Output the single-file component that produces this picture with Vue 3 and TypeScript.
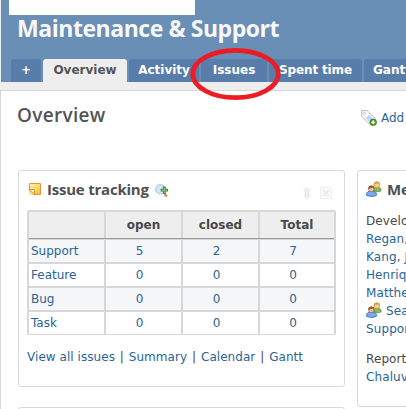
<script setup lang="ts">
interface Tab { label: string; key: string; active?: boolean }
interface Tracker { name: string; open: number; closed: number; total: number }

const tabs: Tab[] = [
  { label: '+', key: 'plus' },
  { label: 'Overview', key: 'overview', active: true },
  { label: 'Activity', key: 'activity' },
  { label: 'Issues', key: 'issues' },
  { label: 'Spent time', key: 'spent' },
  { label: 'Gantt', key: 'gantt' },
]
const trackers: Tracker[] = [
  { name: 'Support', open: 5, closed: 2, total: 7 },
  { name: 'Feature', open: 0, closed: 0, total: 0 },
  { name: 'Bug', open: 0, closed: 0, total: 0 },
  { name: 'Task', open: 0, closed: 0, total: 0 },
]
const links: string[] = ['View all issues', 'Summary', 'Calendar', 'Gantt']
const developers: string[] = ['Regan,', 'Kang, J', 'Henrique', 'Matthew']
</script>

<template>
  <div class="page">
    <svg class="defs" width="0" height="0">
      <symbol id="people" viewBox="0 0 16 16">
        <path d="M8 10V7.5Q8.500 6 11 6t4 1.800V10Q12 11.500 8 10z" fill="#86b957" stroke="#5e923a" stroke-width=".8" />
        <circle cx="10.700" cy="3.800" r="2.900" fill="#f3d08c" stroke="#c98f35" stroke-width=".7" />
        <path d="M7.800 3.500Q8 .6 11 .6t3 3L12.300 2.300z" fill="#d99e3a" />
        <path d="M.7 14.500V12q.5-2 4.800-2t4.800 2v2.500Q6 16.500.7 14.500z" fill="#79aaf0" stroke="#3c6fc2" stroke-width=".9" />
        <circle cx="5.300" cy="7.800" r="2.800" fill="#ecc39a" stroke="#9a6138" stroke-width=".7" />
        <path d="M2.300 8Q2 4.600 5.400 4.600T8.300 8L6.500 6.500z" fill="#965936" />
      </symbol>
    </svg>
    <header class="header">
      <div class="blank"></div>
      <h1>Maintenance &amp; Support</h1>
      <nav class="tabs">
        <a v-for="t in tabs" :key="t.key" class="tab" :class="[t.key, { active: t.active }]"><span>{{ t.label }}</span></a>
      </nav>
    </header>
    <main class="content">
      <div class="heading">
        <h2>Overview</h2>
        <a class="add">
          <svg width="16" height="16" viewBox="0 0 16 16">
            <path d="M.6.6h5.600l8.300 8.200-5.700 5.700L.6 6.300z" fill="#fafafa" stroke="#bcbcbc" />
            <path d="M8 4.700l4.300 4.300-3.500 3.600L4.600 8.300z" fill="#b5dcfb" />
            <circle cx="3.400" cy="3.400" r="1.200" fill="#fff" stroke="#bbb" stroke-width=".8" />
            <circle cx="12.200" cy="12.300" r="3.300" fill="#5c9632" stroke="#397316" stroke-width=".8" />
            <path d="M12.200 10.300v4M10.200 12.300h4" stroke="#fff" stroke-width="1.300" />
          </svg>
          <span>Add</span>
        </a>
      </div>
      <div class="columns">
        <div class="left">
          <section class="card tracking">
            <div class="title">
              <svg class="note" width="12" height="12" viewBox="0 0 12 12">
                <defs><linearGradient id="gold" x1="0" y1="0" x2=".7" y2="1"><stop stop-color="#fff2b5" /><stop offset="1" stop-color="#f2c43d" /></linearGradient></defs>
                <path d="M.5.5h11v11H.5z" fill="url(#gold)" stroke="#e4943b" />
                <path d="M1 6.500h4.500V11L1 7.500z" fill="#fff3c5" stroke="#dc8a32" stroke-width=".8" />
                <path d="M0 7.500L4.500 12H0z" fill="#f6dfb8" />
              </svg>
              <h3>Issue tracking</h3>
              <svg class="mag" width="14" height="14" viewBox="0 0 14 14">
                <path d="M9.500 10l2.500 2.500" stroke="#c08a50" stroke-width="2.200" />
                <ellipse cx="5.500" cy="5.300" rx="5" ry="4.700" fill="#cfe5fa" stroke="#a7c8ea" />
                <path d="M9.300 2.500v7.400M5.700 6.200h7.300" stroke="#3e8144" stroke-width="2.800" />
                <path d="M9.300 3.500v5.400M6.700 6.200h5.300" stroke="#83bd77" stroke-width="1.200" />
              </svg>
              <svg class="move" width="8" height="12" viewBox="0 0 8 12">
                <path d="M4 .5L7.300 4H5.500v4h1.800L4 11.500.7 8h1.800V4H.7z" fill="#e7f3e5" stroke="#e0ebde" />
              </svg>
              <svg class="close" width="12" height="12" viewBox="0 0 12 12">
                <rect x=".5" y=".5" width="11" height="11" fill="#fcfcfc" stroke="#f0f0f0" />
                <path d="M3 3l6 6M9 3L3 9" stroke="#ebebeb" stroke-width="1.800" />
              </svg>
            </div>
            <div class="table">
              <div class="row head"><span></span><span>open</span><span>closed</span><span>Total</span></div>
              <div v-for="r in trackers" :key="r.name" class="row">
                <a class="name">{{ r.name }}</a><a>{{ r.open }}</a><a>{{ r.closed }}</a><a>{{ r.total }}</a>
              </div>
            </div>
            <p class="links"><template v-for="(l, i) in links" :key="l"><i v-if="i"> | </i><a>{{ l }}</a></template></p>
          </section>
          <section class="card following"></section>
        </div>
        <section class="card members">
          <div class="title"><svg width="16" height="16"><use href="#people" /></svg><h3>Members</h3></div>
          <div class="lines">
            <div class="plain">Developer:</div>
            <a v-for="d in developers" :key="d">{{ d }}</a>
            <a class="group"><svg width="16" height="16"><use href="#people" /></svg>Sean</a>
            <a>Support</a>
          </div>
          <div class="lines reporter"><div class="plain">Reporter:</div><a>Chaluva</a></div>
        </section>
      </div>
    </main>
    <svg class="ring" width="94" height="56" viewBox="0 0 94 56">
      <ellipse cx="46.500" cy="28" rx="42.800" ry="23.700" fill="none" stroke="#ed1c24" stroke-width="4.800" />
    </svg>
  </div>
</template>

<style>
body { margin: 0; overflow: hidden; }
</style>
<style scoped>
* { box-sizing: border-box; }
.page { position: relative; width: 406px; height: 409px; overflow: hidden; background: #eee; color: #484848; font: 12px/18px "DejaVu Sans", Verdana, sans-serif; white-space: nowrap; }
.defs { position: absolute; }
h1, h2, h3, p { margin: 0; }
h1, h2, h3 { font-family: "Trebuchet MS", "Open Sans", sans-serif; }
svg { display: block; flex: none; }
a { color: #2a6496; }
.header { margin-left: 1px; height: 82px; background: #698fb6; display: flex; flex-direction: column; }
.blank { width: 186px; height: 15px; margin-left: 8px; background: #fff; flex: none; }
h1 { height: 44px; padding-left: 16px; font-size: 23px; line-height: 26px; font-weight: 700; color: #f8f8f8; letter-spacing: -.45px; }
.tabs { display: flex; gap: 2px; padding-left: 10px; height: 23px; }
.tab { flex: none; height: 23px; border-radius: 3px 3px 0 0; background: #587dab; color: #fff; font: bold 12px/23px "DejaVu Sans", sans-serif; display: flex; justify-content: center; }
.plus { width: 30px; }
.overview { width: 84px; }
.activity { width: 70px; }
.issues { width: 66px; }
.spent { width: 93px; letter-spacing: -.15px; }
.gantt { width: 65px; justify-content: flex-start; padding-left: 9px; }
.tab.active { background: #eee; color: #555; }
.content { margin-top: 8px; height: 319px; border: solid #d7d7d7; border-width: 1px 0 0 1px; background: #fff; overflow: hidden; }
.heading { display: flex; height: 79px; padding: 10px 0 0 16px; }
h2 { width: 344px; font-size: 19px; line-height: 28px; font-weight: 600; color: #555; letter-spacing: .3px; }
.add { display: flex; gap: 4px; height: 18px; margin-top: 8px; }
.add svg { margin-top: 1px; }
.columns { display: flex; gap: 12px; padding-left: 17px; }
.card { border: 1px solid #d9d9d9; border-radius: 3px; background: #fff; }
.left { width: 327px; flex: none; }
.tracking { height: 217px; padding: 0 8px; }
.following { height: 60px; margin-top: 20px; }
.members { width: 200px; height: 237px; padding-left: 8px; flex: none; }
.title { display: flex; height: 39px; padding-top: 8px; }
h3 { font-size: 15px; line-height: 21px; font-weight: 700; color: #505050; letter-spacing: -.22px; }
.note { margin: 4px 6px 0 2px; }
.mag { margin: 5px 0 0 6px; }
.move { margin: 8px 9px 0 auto; }
.close { margin: 8px 4px 0 0; }
.table { width: 309px; height: 125px; border: 1px solid #d7d7d7; border-width: 2px 2px 1px; border-radius: 2px; background: #d7d7d7; }
.row { display: grid; grid-template-columns: 75px 75px 75px 74px; grid-template-rows: 100%; column-gap: 2px; height: 22px; margin-bottom: 2px; line-height: 23px; text-align: center; }
.row:last-child { margin-bottom: 0; }
.row > * { background: #fff; padding-right: 8px; }
.row:nth-child(even) > * { background: #f6f7f8; }
.row.head { height: 27px; line-height: 27px; font-weight: 700; margin-bottom: 1px; border-bottom: 1px solid #999; }
.row.head > * { background: #eee; padding: 0; }
.row > .name { text-align: left; padding: 0 0 0 2px; }
.links { padding-top: 13px; letter-spacing: .05px; }
.links i { font-style: normal; white-space: pre; padding: 0 1px; }
.members .title { height: 41px; gap: 5px; }
.members .title svg { margin-top: 2px; }
.lines { display: flex; flex-direction: column; letter-spacing: .1px; }
.group { display: flex; gap: 4px; }
.reporter { margin-top: 12px; }
.ring { position: absolute; left: 189px; top: 46px; }
</style>
